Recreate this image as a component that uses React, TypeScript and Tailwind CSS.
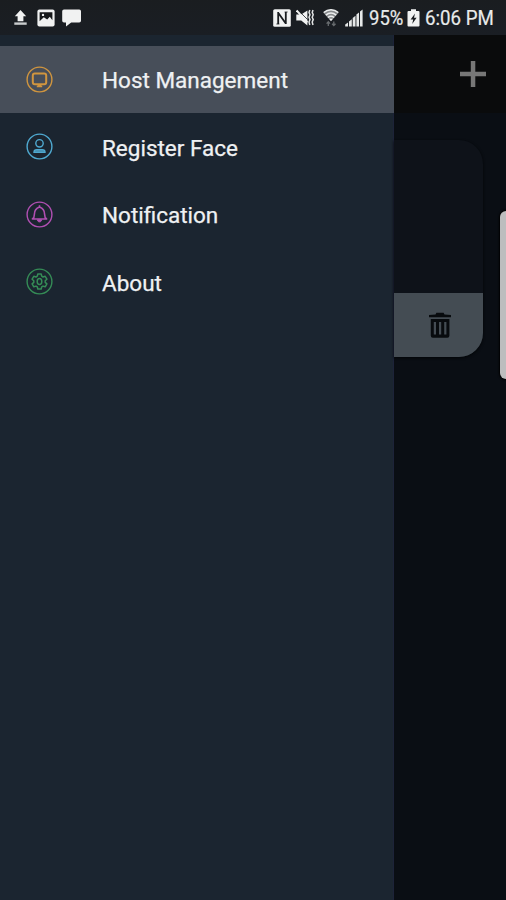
import React from 'react';

const UploadIcon = () => (
  <svg className="w-[13px] h-[18px]" viewBox="0 0 13 18" fill="#f1f2f2">
    <path d="M6.5 .9 12.2 7.2H9.4V12.2H3.6V7.2H.8z" />
    <path d="M.3 13.4h12.4v2.4H.3z" fill="#c9cccd" />
  </svg>
);

const ImageIcon = () => (
  <svg className="w-[18px] h-[18px]" viewBox="0 0 18 18">
    <rect x=".4" y=".4" width="17.2" height="17.2" rx="2" fill="#f1f2f2" />
    <path
      d="M2.6 3.2h12.8v8l-2.6-3.4-2.6 2.7-3.4-2.2-4.2 3.9z"
      fill="#17191b"
    />
    <circle cx="6" cy="5.9" r="1.2" fill="#f1f2f2" />
  </svg>
);

const ChatIcon = () => (
  <svg className="w-[19px] h-[18px]" viewBox="0 0 19 18" fill="#f1f2f2">
    <path d="M2 .5h15.2a1.8 1.8 0 0 1 1.8 1.8v9.4a1.8 1.8 0 0 1-1.8 1.8H9.2L4 17.6v-4.1H2A1.8 1.8 0 0 1 .2 11.7V2.3A1.8 1.8 0 0 1 2 .5z" />
  </svg>
);

const NfcIcon = () => (
  <svg className="w-[18px] h-[18px]" viewBox="0 0 18 18">
    <rect x=".2" y=".2" width="17.6" height="17.6" rx="1.6" fill="#f1f2f2" />
    <path
      d="M5.2 3v12M5 3.4l7.8 11.2M12.8 3v12"
      fill="none"
      stroke="#1a1d20"
      strokeWidth="1.8"
    />
    <path d="M3.4 15h3M11.6 3h3" stroke="#1a1d20" strokeWidth=".8" />
  </svg>
);

const MuteIcon = () => (
  <svg className="w-[18px] h-[18px]" viewBox="0 0 18 18" fill="none">
    <path d="M.3 5.4h4.9L11.4 1.4v15l-6.2-4.8H.3z" fill="#f1f2f2" />
    <path d="M2.2 1.2l9.4 9.4" stroke="#1a1d20" strokeWidth=".8" />
    <path d="M.6 1.4l10.8 12" stroke="#f1f2f2" strokeWidth="2" />
    <path
      d="M13.8 1l-.8 2.4 1 2.4-1 2.4 1 2.4-1 2.4.8 3M17 1l-.8 2.4 1 2.4-1 2.4 1 2.4-1 2.4.8 3"
      stroke="#e2e4e4"
      strokeWidth="1.5"
    />
  </svg>
);

const WifiIcon = () => (
  <svg className="w-[16px] h-[18px]" viewBox="0 0 16 18" fill="none">
    <path d="M.2 3.6C4.8-.6 11.2-.6 15.8 3.6L8 12.2z" fill="#878a8c" />
    <path
      d="M.8 3.5C5-.1 11-.1 15.2 3.5M2.8 6.1c3.2-2.6 7.2-2.6 10.4 0M4.9 8.5c2-1.6 4.2-1.6 6.2 0"
      stroke="#eceeee"
      strokeWidth="1.6"
    />
    <path d="M6.1 9.8h3.8L8 12z" fill="#f1f2f2" />
    <path
      d="M5.3 17v-4M3.6 14.6l1.7-1.8L7 14.6M10.8 12.4v4M9.1 14.8l1.7 1.8 1.7-1.8"
      stroke="#686c6f"
      strokeWidth="1.3"
    />
  </svg>
);

const SignalIcon = () => (
  <svg className="w-[18px] h-[18px]" viewBox="0 0 18 18" fill="#e6e8e8">
    <path d="M.2 15.6 3 13.5v4H.2zM4 12.4l2.8-2.2v7.3H4zM7.7 9l2.8-2.2v10.7H7.7zM11.4 5.5l2.6-2v14h-2.6zM15 2.5 17.6.5v17H15z" />
  </svg>
);

const BatteryIcon = () => (
  <svg className="w-[13px] h-[18px]" viewBox="0 0 13 18">
    <path
      d="M4 .3h5v1.8h2.5a1 1 0 0 1 1 1v13.4a1 1 0 0 1-1 1H1.5a1 1 0 0 1-1-1V3.1a1 1 0 0 1 1-1H4z"
      fill="#f1f2f2"
    />
    <path d="M8 4.4 3.6 10.4h2.6l-1 4.6 4.4-6.2H7z" fill="#1a1d20" />
  </svg>
);

const MonitorGlyph = () => (
  <>
    <rect x="6.8" y="7.6" width="13.4" height="10.6" rx="2" strokeWidth="2" />
    <path d="M11.8 19h3.4M10.8 20.4h5.4" strokeWidth="1.6" />
  </>
);

const PersonGlyph = () => (
  <>
    <circle cx="13.5" cy="10.3" r="3.7" strokeWidth="1.4" />
    <path
      d="M7.9 19.3c0-1.9 1-2.6 2.9-2.6h5.4c1.9 0 2.9.7 2.9 2.6z"
      strokeWidth="1.2"
      fill="currentColor"
      fillOpacity=".8"
    />
  </>
);

const BellGlyph = () => (
  <>
    <path
      d="M6.4 18c1.6-1 2-2.5 2-4.8 0-3.9 1.8-6.2 5.1-7.3 3.3 1.1 5.1 3.4 5.1 7.3 0 2.3.4 3.8 2 4.8z"
      strokeWidth="1.6"
      strokeLinejoin="round"
    />
    <path d="M11.3 18.8c.3 2.8 4.1 2.8 4.4 0z" fill="currentColor" />
    <path d="M13.5 4.2V6" strokeWidth="1.5" />
  </>
);

const GearGlyph = () => (
  <>
    <path
      d="M11.8 6.3h3.4l.5 2.2 1.3.8 2.2-.7 1.7 2.9-1.7 1.6v1.6l1.7 1.5-1.7 2.9-2.2-.7-1.3.8-.5 2.1h-3.4l-.5-2.1-1.3-.8-2.2.7-1.7-2.9 1.7-1.5v-1.6l-1.7-1.6 1.7-2.9 2.2.7 1.3-.8z"
      strokeWidth="1.5"
      strokeLinejoin="round"
      transform="translate(0 -.3)"
    />
    <ellipse cx="13.5" cy="13.5" rx="2.3" ry="3" strokeWidth="1.5" />
  </>
);

interface MenuItemProps {
  label: string;
  color: string;
  active?: boolean;
  children: React.ReactNode;
}

const MenuItem = ({ label, color, active, children }: MenuItemProps) => (
  <li
    className={`flex h-[67.5px] items-center pl-[26px] ${active ? 'bg-[#474e59]' : ''}`}
  >
    <svg
      className={`mr-[49px] size-[27px] shrink-0 ${color}`}
      viewBox="0 0 27 27"
      fill="none"
      stroke="currentColor"
    >
      <circle cx="13.5" cy="13.5" r="12.4" strokeWidth="1.4" />
      {children}
    </svg>
    <span className="pt-[2px] text-[22.5px] leading-7 text-[#eff1f3] [-webkit-text-stroke:0.25px_#eff1f3]">
      {label}
    </span>
  </li>
);

const StatusBar = () => (
  <header className="flex h-[35px] items-center bg-linear-to-b from-[#1a1d20] to-[#1a1e24] pl-[14px] text-[#e9ebeb]">
    <UploadIcon />
    <div className="ml-[10px] flex gap-[7px]">
      <ImageIcon />
      <ChatIcon />
    </div>
    <div className="ml-auto flex items-center pr-3 text-[21px] [-webkit-text-stroke:0.2px_#e9ebeb]">
      <NfcIcon />
      <span className="ml-[5px] flex">
        <MuteIcon />
      </span>
      <span className="ml-[9px] flex">
        <WifiIcon />
      </span>
      <span className="ml-[6px] flex">
        <SignalIcon />
      </span>
      <span className="ml-[6px] w-[38px] pt-[3px]">
        <span className="inline-block origin-left scale-x-[0.88]">95%</span>
      </span>
      <BatteryIcon />
      <span className="ml-[5px] w-[69px] pt-[3px] whitespace-nowrap">
        <span className="inline-block origin-left scale-x-[0.89]">6:06 PM</span>
      </span>
    </div>
  </header>
);

const Drawer = () => (
  <nav className="w-[394px] shrink-0 bg-[#1b2530] pt-[10.5px] shadow-[inset_-1px_0_0_#1d2339]">
    <ul>
      <MenuItem label="Host Management" color="text-[#d0953f]" active>
        <MonitorGlyph />
      </MenuItem>
      <MenuItem label="Register Face" color="text-[#4fa9d0]">
        <PersonGlyph />
      </MenuItem>
      <MenuItem label="Notification" color="text-[#b04fb2]">
        <BellGlyph />
      </MenuItem>
      <MenuItem label="About" color="text-[#358c56]">
        <GearGlyph />
      </MenuItem>
    </ul>
  </nav>
);

const HostPage = () => (
  <main className="relative flex-1 bg-[#0a0e14]">
    <div className="flex h-[78px] items-center justify-end bg-[#0a0b0c] pr-5">
      <svg className="size-[26px]" viewBox="0 0 26 26" fill="#777777">
        <path d="M10.8 0h4.5v10.8H26v4.5H15.3V26h-4.5V15.3H0v-4.5h10.8z" />
      </svg>
    </div>
    <section className="mt-[27px] mr-[23px] overflow-hidden rounded-tr-[24px] rounded-br-[24px] bg-[#0e1219] shadow-[0_1px_3px_#030507]">
      <div className="h-[153px]" />
      <div className="flex h-[64px] items-center justify-center bg-[#444c53] pl-[2px]">
        <svg className="size-[26px]" viewBox="0 0 26 26" fill="#080b0e">
          <path d="M2 3 8.5 2.6 9.4.8h7.2l.9 1.8L24 3v2.2H2z" />
          <path
            fillRule="evenodd"
            d="M3.8 7h18.6v16.8a2 2 0 0 1-2 2H5.8a2 2 0 0 1-2-2zM6.8 10v12.6H9V10zm5.2 0v12.6h2.2V10zm5.2 0v12.6h2.2V10z"
          />
        </svg>
      </div>
    </section>
    {/* edge panel handle */}
    <div className="absolute top-[176px] right-0 h-[168px] w-[6px] rounded-l-[6px] bg-[#bdbdbe] shadow-[0_0_2px_1px_#000000]" />
  </main>
);

export default function App() {
  return (
    <div
      className="flex h-[900px] w-[506px] flex-col overflow-hidden bg-[#0a0e14]"
      style={{ fontFamily: 'Roboto, "Liberation Sans", sans-serif' }}
    >
      <StatusBar />
      <div className="flex flex-1">
        <Drawer />
        <HostPage />
      </div>
    </div>
  );
}
